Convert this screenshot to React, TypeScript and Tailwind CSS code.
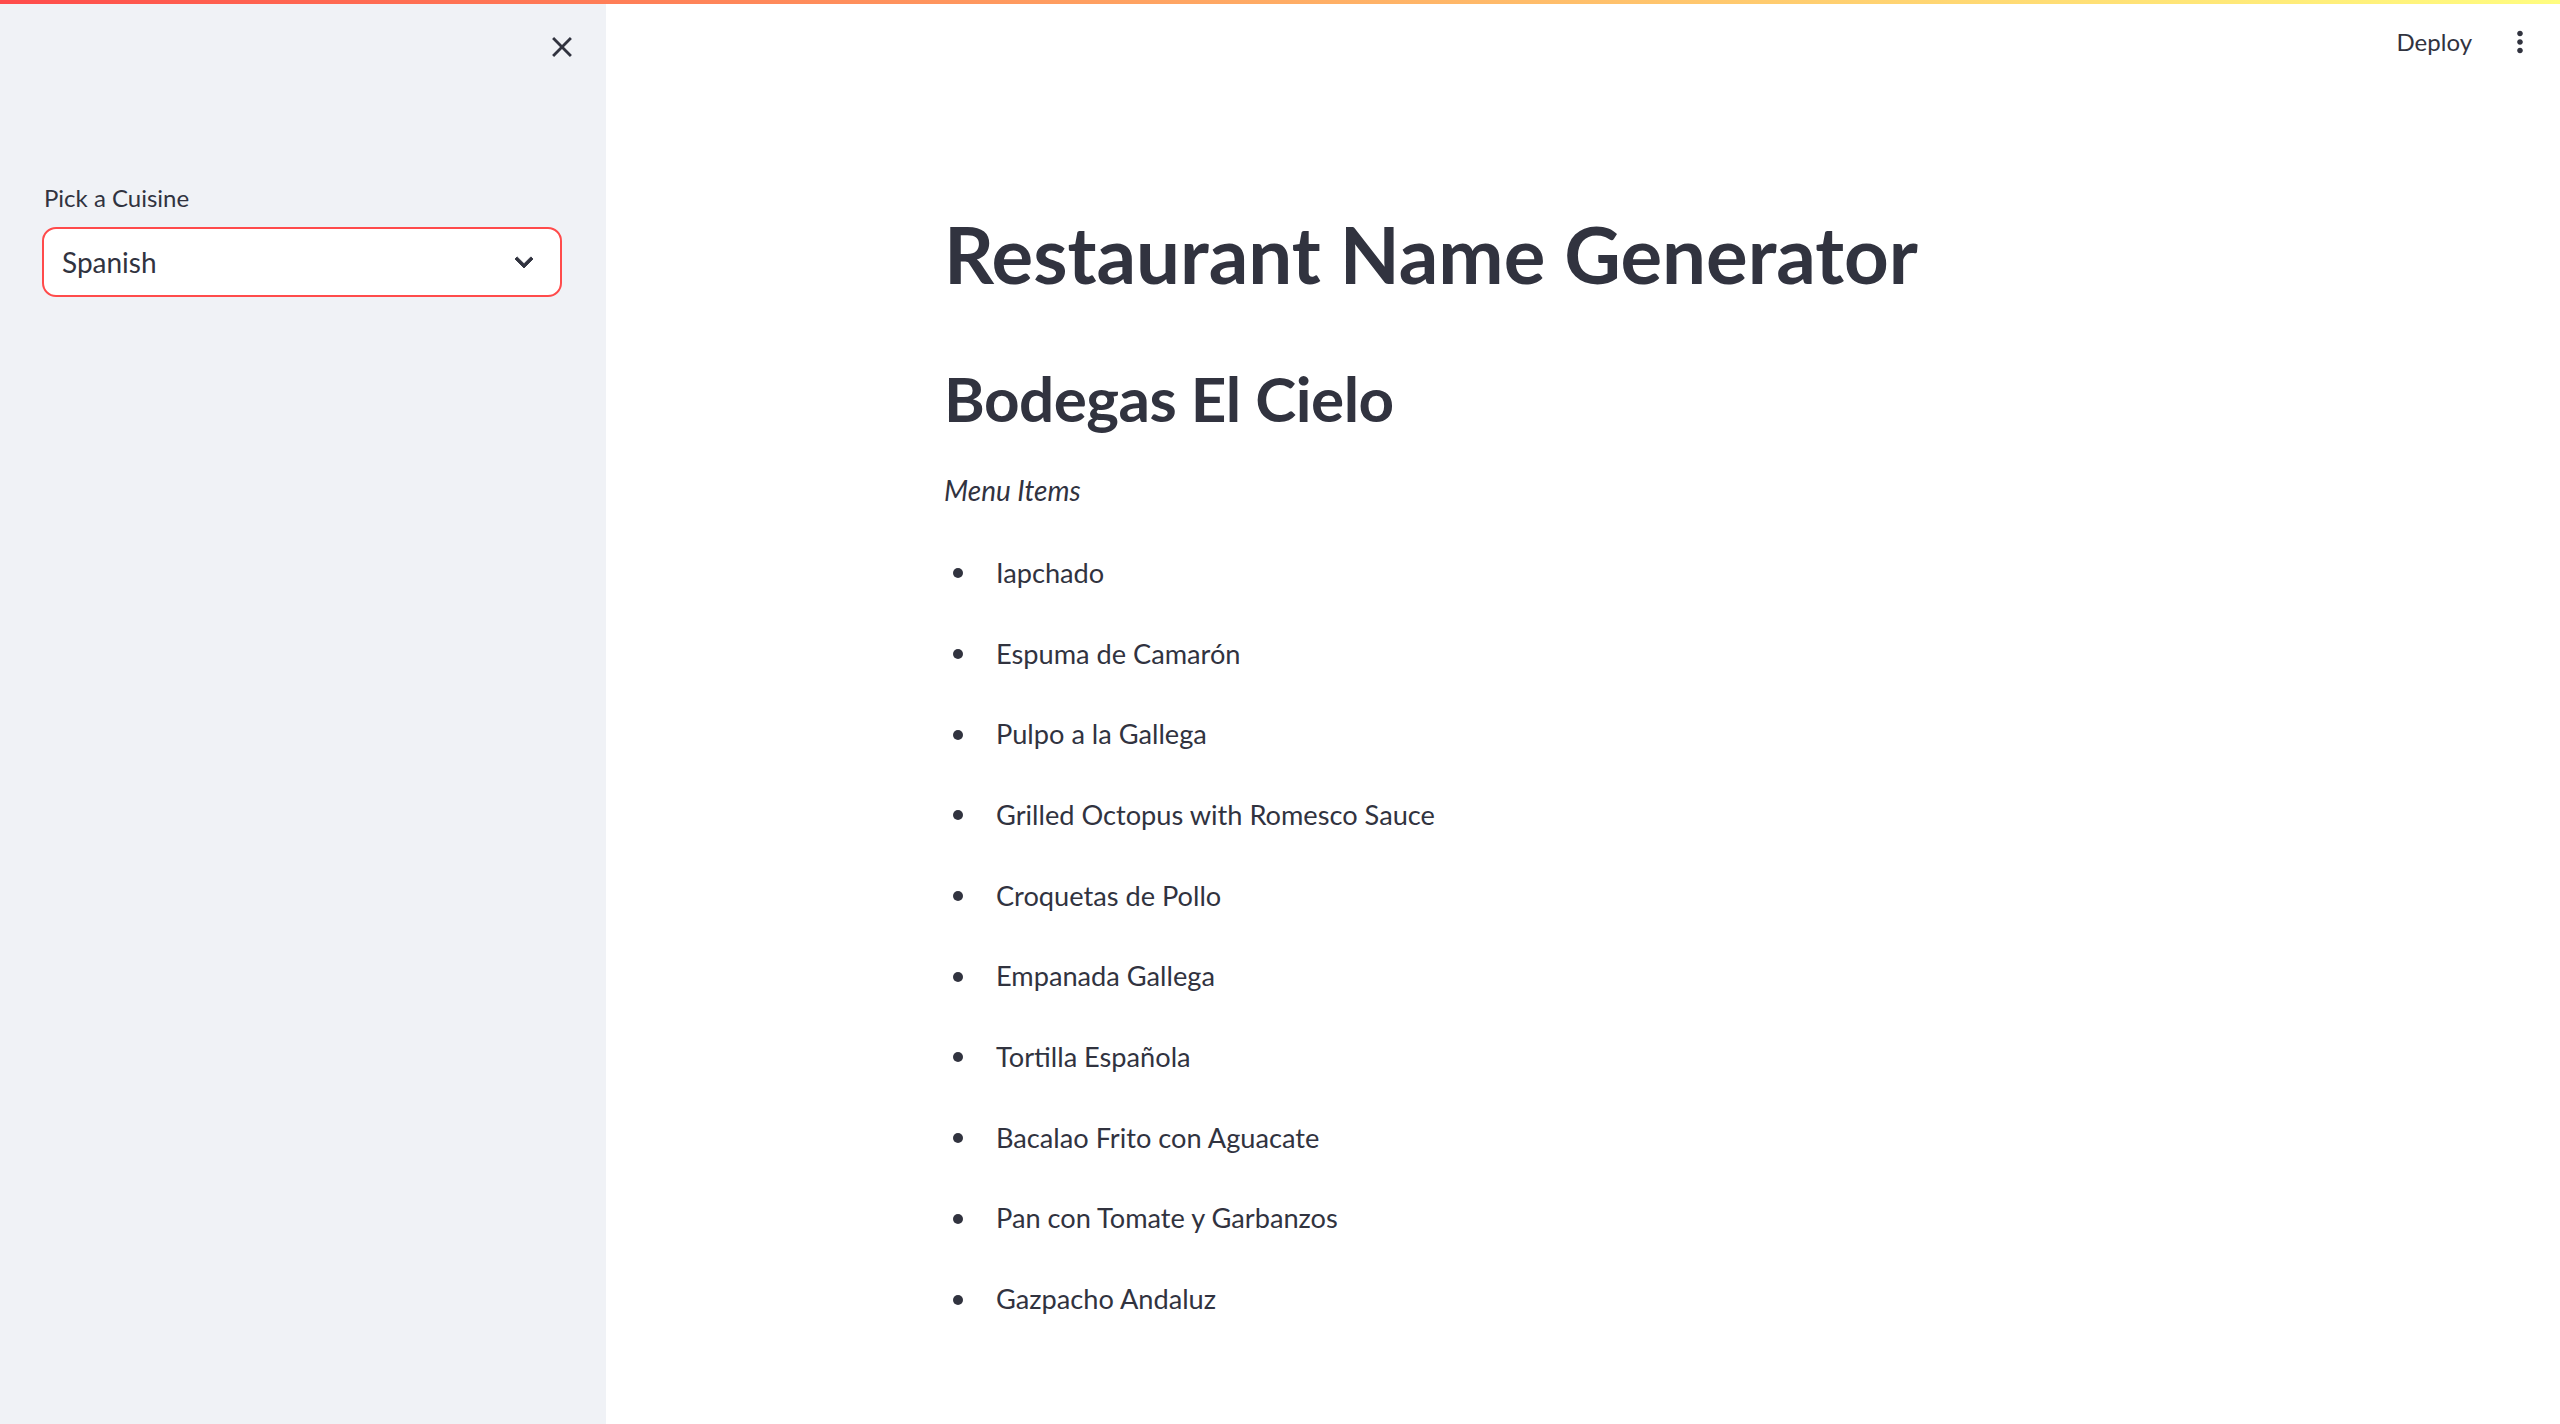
import React from "react";

const items = [
  "Iapchado",
  "Espuma de Camarón",
  "Pulpo a la Gallega",
  "Grilled Octopus with Romesco Sauce",
  "Croquetas de Pollo",
  "Empanada Gallega",
  "Tortilla Española",
  "Bacalao Frito con Aguacate",
  "Pan con Tomate y Garbanzos",
  "Gazpacho Andaluz",
];

const font = { fontFamily: "Lato, 'Noto Sans', sans-serif" };

export default function App() {
  return (
    <div className="w-[2560px] h-[1424px] overflow-hidden flex flex-col bg-white text-[#31333f]" style={font}>
      <div className="h-[4px] w-full bg-gradient-to-r from-[#ff4b4b] to-[#fffd80]" />
      <div className="flex flex-1">
        {/* Sidebar */}
        <aside className="w-[606px] bg-[#f0f2f6] flex flex-col">
          <div className="h-[86px] flex items-center justify-end pr-[27px]">
            <svg width="34" height="34" viewBox="0 0 24 24" fill="#31333f">
              <path d="M19 6.41 17.59 5 12 10.59 6.41 5 5 6.41 10.59 12 5 17.59 6.41 19 12 13.41 17.59 19 19 17.59 13.41 12z" />
            </svg>
          </div>
          <div className="pl-[42px] pr-[44px] pt-[90px]">
            <div className="h-[35px] flex items-center text-[24px] leading-[35px] pl-[2px]">Pick a Cuisine</div>
            <div className="mt-[12px] h-[70px] rounded-[14px] border-2 border-[#ff4b4b] bg-white flex items-center justify-between pl-[18px] pr-[18px]">
              <span className="text-[28px]">Spanish</span>
              <svg width="36" height="36" viewBox="0 0 24 24" fill="#31333f">
                <path d="M7.41 8.59 12 13.17l4.59-4.58L18 10l-6 6-6-6 1.41-1.41z" stroke="#31333f" strokeWidth="0.6" />
              </svg>
            </div>
          </div>
        </aside>
        {/* Main */}
        <main className="flex-1 flex flex-col">
          <header className="h-[76px] flex items-center justify-end pr-[23px] gap-[31px]">
            <span className="text-[24px]">Deploy</span>
            <svg width="34" height="34" viewBox="0 0 24 24" fill="#31333f">
              <path d="M12 8c1.1 0 2-.9 2-2s-.9-2-2-2-2 .9-2 2 .9 2 2 2zm0 2c-1.1 0-2 .9-2 2s.9 2 2 2 2-.9 2-2-.9-2-2-2zm0 6c-1.1 0-2 .9-2 2s.9 2 2 2 2-.9 2-2-.9-2-2-2z" />
            </svg>
          </header>
          <div className="w-[1278px] mx-auto pt-[126px] flex flex-col">
            <h1 className="h-[95px] flex items-center text-[78px] font-bold tracking-[0px] leading-none">Restaurant Name Generator</h1>
            <h2 className="mt-[58px] h-[78px] flex items-center text-[62px] font-bold tracking-[-0.5px] leading-none">Bodegas El Cielo</h2>
            <p className="mt-[30px] h-[46px] flex items-center text-[28px] italic">Menu Items</p>
            <ul className="mt-[20px] flex flex-col">
              {items.map((it) => (
                <li key={it} className="h-[80.7px] flex items-center text-[27.2px]">
                  <span className="w-[52px] flex justify-start pl-[9px]">
                    <span className="w-[10px] h-[10px] rounded-full bg-[#31333f]" />
                  </span>
                  <span>{it}</span>
                </li>
              ))}
            </ul>
          </div>
        </main>
      </div>
    </div>
  );
}
